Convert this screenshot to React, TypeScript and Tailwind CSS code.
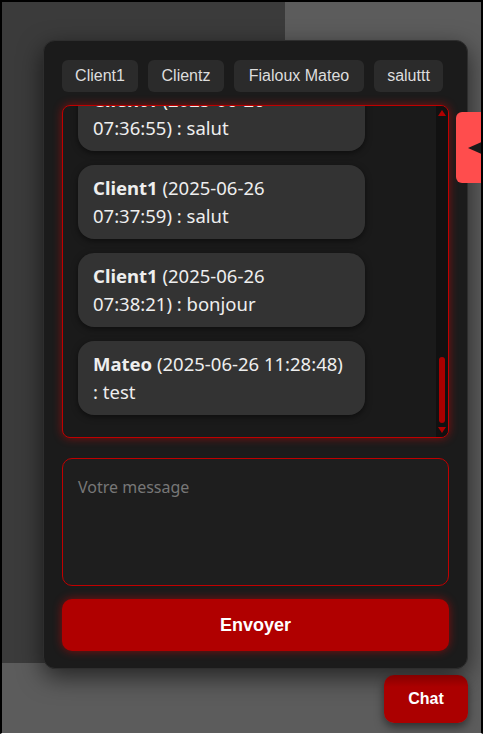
import React from "react";

const tabs = [
  { label: "Client1", w: "w-[76px]" },
  { label: "Clientz", w: "w-[76px]" },
  { label: "Fialoux Mateo", w: "w-[130px]" },
  { label: "saluttt", w: "w-[69px]" },
];

const messages = [
  { name: "Client1", lines: ["(2025-06-26", "07:36:55) : salut"] },
  { name: "Client1", lines: ["(2025-06-26", "07:37:59) : salut"] },
  { name: "Client1", lines: ["(2025-06-26", "07:38:21) : bonjour"] },
  { name: "Mateo", lines: ["(2025-06-26 11:28:48)", ": test"] },
];

const Bubble = ({ name, lines }: { name: string; lines: string[] }) => (
  <div className="my-[7px] w-[287px] shrink-0 rounded-[16px] bg-[#333333] px-[15px] py-[9px] text-[18.5px] leading-[28px] text-[#eeeeee] shadow-[0_2px_6px_rgba(0,0,0,0.5)] whitespace-nowrap">
    <div>
      <span className="font-bold">{name}</span> {lines[0]}
    </div>
    <div>{lines[1]}</div>
  </div>
);

const Scrollbar = () => (
  <div className="flex w-[12px] shrink-0 flex-col items-center bg-[#111111] py-[4px]">
    <div className="h-0 w-0 border-x-[4px] border-b-[6px] border-x-transparent border-b-[#b00000]" />
    <div className="flex-1" />
    <div className="h-[66px] w-[6px] rounded-full bg-[#aa0000]" />
    <div className="h-[4px]" />
    <div className="h-0 w-0 border-x-[4px] border-t-[6px] border-x-transparent border-t-[#b00000]" />
  </div>
);

export default function App() {
  return (
    <div className="relative h-[734px] w-[483px] overflow-hidden border-x-2 border-t-2 border-b border-x-black border-t-black border-b-white bg-[#5c5c5c] font-['Noto_Sans',sans-serif]">
      <div className="flex h-[661px] w-[283px] bg-[#3b3b3b]" />

      {/* chat panel */}
      <div className="absolute left-[41px] top-[38px] flex h-[629px] w-[425px] flex-col rounded-[12px] border border-[#2e2e2e] bg-[#1b1b1b] px-[18px] pt-[19px] shadow-[0_8px_24px_rgba(0,0,0,0.6)]">
        <div className="flex gap-[10px] font-['Liberation_Sans',Arial,sans-serif]">
          {tabs.map((t) => (
            <button
              key={t.label}
              className={`${t.w} h-[32px] rounded-[6px] bg-[#2b2b2b] text-[16px] text-[#dddddd]`}
            >
              {t.label}
            </button>
          ))}
        </div>

        <div className="mt-[13px] flex h-[333px] overflow-hidden rounded-[8px] border border-[#c00000] bg-[#1a1a1a] shadow-[0_0_10px_rgba(255,0,0,0.45)]">
          <div className="flex flex-1 flex-col justify-end overflow-hidden p-[15px]">
            {messages.map((m, i) => (
              <Bubble key={i} name={m.name} lines={m.lines} />
            ))}
          </div>
          <Scrollbar />
        </div>

        <textarea
          placeholder="Votre message"
          className="mt-[20px] h-[128px] resize-none rounded-[10px] border border-[#c00000] bg-[#1e1e1e] px-[15px] py-[16px] text-[16px] leading-[24px] text-[#eeeeee] outline-none placeholder:text-[#777777]"
        />

        <button className="mt-[13px] h-[52px] rounded-[10px] bg-[#b00000] font-['Liberation_Sans',Arial,sans-serif] text-[18px] font-bold text-white shadow-[0_0_10px_rgba(255,0,0,0.45)]">
          Envoyer
        </button>
      </div>

      {/* side toggle */}
      <div className="absolute left-[454px] top-[110px] flex h-[71px] w-[40px] items-center rounded-l-[6px] bg-[#ff4d4d] pl-[12px]">
        <div className="h-0 w-0 border-y-[7px] border-r-[16px] border-y-transparent border-r-[#1a1a1a]" />
      </div>

      {/* chat toggle */}
      <button className="absolute left-[382px] top-[673px] h-[48px] w-[84px] rounded-[10px] bg-[linear-gradient(#860000,#ab0000_25%,#ab0000)] font-['Liberation_Sans',Arial,sans-serif] text-[16px] font-bold text-white shadow-[0_4px_10px_rgba(0,0,0,0.5)]">
        Chat
      </button>
    </div>
  );
}
